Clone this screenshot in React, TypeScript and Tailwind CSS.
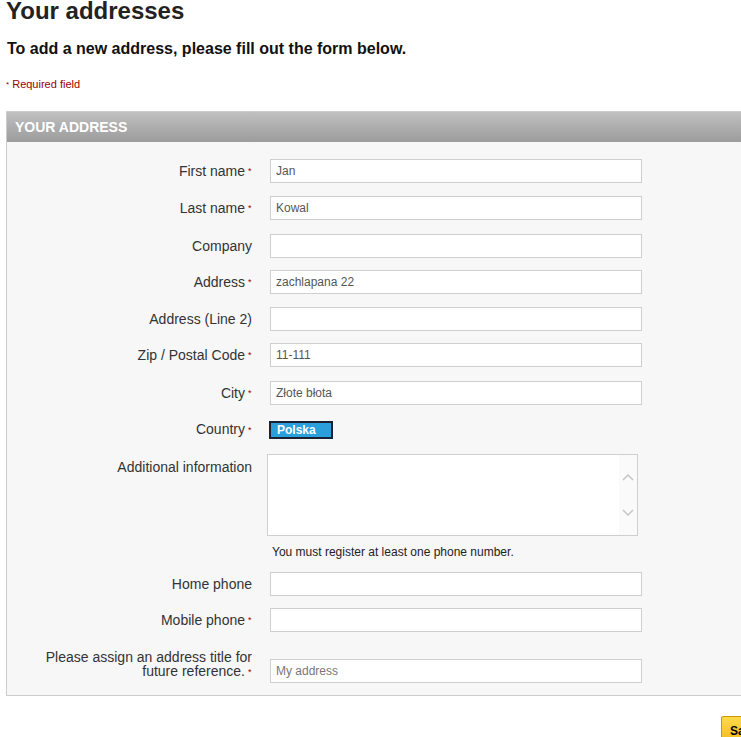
import React from "react";

type Field = {
  label: string;
  value?: string;
  required?: boolean;
  mt: string;
};

const fields: Field[] = [
  { label: "First name", value: "Jan", required: true, mt: "mt-0" },
  { label: "Last name", value: "Kowal", required: true, mt: "mt-[13px]" },
  { label: "Company", mt: "mt-[14px]" },
  { label: "Address", value: "zachlapana 22", required: true, mt: "mt-[12px]" },
  { label: "Address (Line 2)", mt: "mt-[13px]" },
  { label: "Zip / Postal Code", value: "11-111", required: true, mt: "mt-[12px]" },
  { label: "City", value: "Złote błota", required: true, mt: "mt-[14px]" },
];

// little red marker after required labels
const Star = () => (
  <span className="inline-block w-[7px] pl-[3px] text-left text-[9px] leading-none text-[#990000] align-middle">
    *
  </span>
);

const TextRow = ({ label, value, required, mt }: Field) => (
  <div className={`flex items-center ${mt}`}>
    <div className="w-[245px] shrink-0 text-right text-[14px] text-[#333]">
      {label}
      {required && <Star />}
    </div>
    <div className="ml-[18px] h-[24px] w-[372px] border border-[#cfcfcf] bg-white px-[5px] text-[12px] leading-[22px] text-[#555]">
      {value}
    </div>
  </div>
);

export default function App() {
  return (
    <div className="h-[737px] w-[741px] overflow-hidden bg-white font-['Liberation_Sans',Arial,sans-serif]">
      <div className="w-[800px] pl-[6px]">
        <h1 className="mt-[-3px] text-[24px] font-bold leading-[28px] text-[#222]">
          Your addresses
        </h1>
        <h3 className="mt-[14px] pl-[1px] text-[16px] font-bold leading-[20px] text-[#111]">
          To add a new address, please fill out the form below.
        </h3>
        <p className="mt-[18px] text-[11px] leading-[14px] text-[#990000]">
          <span className="text-[8px] align-middle">*</span> Required field
        </p>

        <div className="mt-[19px] border border-[#cccccc] bg-[#f7f7f7] pb-[12px]">
          <div className="h-[30px] bg-gradient-to-b from-[#c0c0c0] to-[#9c9c9c] pl-[8px] text-[14px] font-bold leading-[30px] text-white">
            YOUR ADDRESS
          </div>

          <div className="pt-[17px]">
            {fields.map((f) => (
              <TextRow key={f.label} {...f} />
            ))}

            <div className="mt-[14px] flex items-center">
              <div className="w-[245px] shrink-0 text-right text-[14px] text-[#333]">
                Country
                <Star />
              </div>
              <div className="ml-[17px] h-[18px] w-[64px] border-2 border-[#1b2233] bg-[#2b9fdb] pl-[6px] text-[12px] font-bold leading-[14px] text-white">
                Polska
              </div>
            </div>

            <div className="mt-[14px] flex items-start">
              <div className="w-[245px] shrink-0 pt-[5px] text-right text-[14px] leading-[16px] text-[#333]">
                Additional information
              </div>
              <div className="ml-[15px] flex h-[82px] w-[371px] justify-end border border-[#cfcfcf] bg-white">
                <div className="flex w-[18px] flex-col items-center justify-between bg-[#fafafa] py-[18px]">
                  <svg width="12" height="8" viewBox="0 0 12 8" fill="none">
                    <path d="M1 7 L6 2 L11 7" stroke="#c4c4c4" strokeWidth="1.5" />
                  </svg>
                  <svg width="12" height="8" viewBox="0 0 12 8" fill="none">
                    <path d="M1 1 L6 6 L11 1" stroke="#c4c4c4" strokeWidth="1.5" />
                  </svg>
                </div>
              </div>
            </div>

            <p className="mt-[9px] pl-[265px] text-[12px] leading-[14px] text-[#222]">
              You must register at least one phone number.
            </p>

            <TextRow label="Home phone" mt="mt-[13px]" />
            <TextRow label="Mobile phone" required mt="mt-[12px]" />

            <div className="mt-[18px] flex items-end">
              <div className="w-[245px] shrink-0 pb-[5px] text-right text-[14px] leading-[14px] text-[#333]">
                Please assign an address title for
                <br />
                future reference.
                <Star />
              </div>
              <div className="ml-[18px] h-[24px] w-[372px] border border-[#cfcfcf] bg-white px-[5px] text-[12px] leading-[22px] text-[#777]">
                My address
              </div>
            </div>
          </div>
        </div>

        <div className="mt-[20px] pl-[715px]">
          <button className="h-[30px] rounded-[2px] border border-[#c79b00] bg-gradient-to-b from-[#ffd94a] to-[#f0b800] px-[8px] text-[12px] font-bold leading-[26px] text-black">
            Save
          </button>
        </div>
      </div>
    </div>
  );
}
